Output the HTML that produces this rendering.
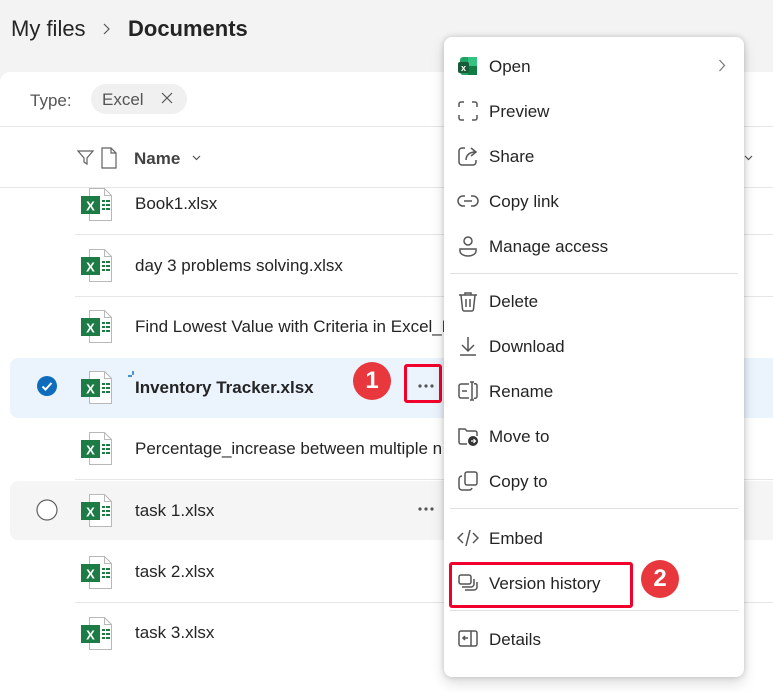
<!DOCTYPE html>
<html><head><style>
body{margin:0;width:773px;height:660px;overflow:hidden;background:#f3f3f3;font-family:"Liberation Sans",Arial,sans-serif;position:relative;color:#242424}
.a{position:absolute}
.panel{left:0;top:72px;width:800px;height:620px;background:#fff;border-radius:10px 0 0 0}
.line{position:absolute;height:1px;background:#e6e6e6}
.fn{position:absolute;left:135px;font-size:17px;color:#242424;white-space:nowrap}
.menu{left:444px;top:37px;width:300px;height:640px;background:#fff;border-radius:8px;box-shadow:0 0 6px rgba(0,0,0,.18),0 6px 14px rgba(0,0,0,.14)}
.mi{position:absolute;left:45px;font-size:17px;color:#242424;white-space:nowrap}
.ic{position:absolute;left:13px;width:22px;height:22px}
.sep{position:absolute;left:6px;width:288px;height:1px;background:#e0e0e0}
.xl{position:absolute;left:80px;width:36px;height:36px}
.badge{position:absolute;width:38px;height:38px;border-radius:50%;background:#e8383d;color:#fff;font-weight:bold;font-size:24px;text-align:center;line-height:38px}
.rb{position:absolute;border:3px solid #f0002a;border-radius:3px;box-sizing:border-box}
</style></head><body>
<div class="a" style="left:11px;top:16px;font-size:22px;color:#242424">My files</div>
<svg class="a" style="left:102px;top:23px" width="8" height="12"><path d="M2 1l5 5-5 5" fill="none" stroke="#555" stroke-width="1.2"/></svg>
<div class="a" style="left:128px;top:16px;font-size:22px;font-weight:bold;color:#242424">Documents</div>
<div class="a panel"></div>
<div class="a" style="left:30px;top:91px;font-size:17px;color:#555">Type:</div>
<div class="a" style="left:91px;top:84px;width:96px;height:30px;border-radius:15px;background:#f0f0f0"></div>
<div class="a" style="left:102px;top:90px;font-size:17px;color:#555">Excel</div>
<svg class="a" style="left:161px;top:92px" width="12" height="12"><path d="M1 1l10 10M11 1L1 11" stroke="#555" stroke-width="1.2"/></svg>
<div class="line" style="left:0;top:126px;width:773px"></div>
<svg class="a" style="left:76px;top:148px" width="20" height="20" viewBox="0 0 20 20"><path d="M2 3h15l-6 7v6l-3-2v-4z" fill="none" stroke="#616161" stroke-width="1.2"/></svg>
<svg class="a" style="left:100px;top:147px" width="18" height="22" viewBox="0 0 18 22"><path d="M2 1h9l5 5v15H2z M11 1v5h5" fill="none" stroke="#616161" stroke-width="1.2"/></svg>
<div class="a" style="left:134px;top:149px;font-size:17px;font-weight:bold;color:#424242">Name</div>
<svg class="a" style="left:192px;top:155px" width="9" height="6"><path d="M1 1l3.5 3.5L8 1" fill="none" stroke="#555" stroke-width="1.2"/></svg>
<div class="line" style="left:0;top:187px;width:773px"></div>
<div class="line" style="left:75px;top:234px;width:700px"></div>
<div class="line" style="left:75px;top:296px;width:700px"></div>
<div class="line" style="left:75px;top:602px;width:700px"></div>
<div class="line" style="left:75px;top:479px;width:700px"></div>
<div class="a" style="left:10px;top:358px;width:780px;height:60px;background:#ebf3fc;border-radius:8px"></div>
<div class="a" style="left:10px;top:481px;width:780px;height:59px;background:#f5f5f5;border-radius:8px"></div>

<svg width="0" height="0" style="position:absolute"><defs><g id="x">
<path d="M9.5 1.5h15l7 7v25h-22z" fill="#fff" stroke="#b8b8b8" stroke-width="1"/><path d="M24.5 1.5v7h7" fill="none" stroke="#b8b8b8"/>
<rect x="1" y="9" width="19" height="18" fill="#1d7c45"/>
<text x="10.5" y="23.5" font-family="Liberation Sans" font-weight="bold" font-size="13" fill="#fff" text-anchor="middle">X</text>
<g fill="#1d7c45"><rect x="22" y="13" width="3" height="2"/><rect x="26" y="13" width="4" height="2"/><rect x="22" y="17" width="3" height="2"/><rect x="26" y="17" width="4" height="2"/><rect x="22" y="21" width="3" height="2"/><rect x="26" y="21" width="4" height="2"/></g>
</g><g id="d" fill="#555"><circle cx="2" cy="2" r="1.6"/><circle cx="8" cy="2" r="1.6"/><circle cx="14" cy="2" r="1.6"/></g></defs></svg>
<svg class="xl" style="top:187px" viewBox="0 0 36 36"><use href="#x"/></svg>
<svg class="xl" style="top:248px" viewBox="0 0 36 36"><use href="#x"/></svg>
<svg class="xl" style="top:309px" viewBox="0 0 36 36"><use href="#x"/></svg>
<svg class="xl" style="top:370px" viewBox="0 0 36 36"><use href="#x"/></svg>
<svg class="xl" style="top:431px" viewBox="0 0 36 36"><use href="#x"/></svg>
<svg class="xl" style="top:493px" viewBox="0 0 36 36"><use href="#x"/></svg>
<svg class="xl" style="top:555px" viewBox="0 0 36 36"><use href="#x"/></svg>
<svg class="xl" style="top:616px" viewBox="0 0 36 36"><use href="#x"/></svg>

<div class="fn" style="top:194px">Book1.xlsx</div>
<div class="fn" style="top:256px">day 3 problems solving.xlsx</div>
<div class="fn" style="top:317px">Find Lowest Value with Criteria in Excel_P</div>
<div class="fn" style="top:378px;font-weight:bold">Inventory Tracker.xlsx</div>
<div class="fn" style="top:439px">Percentage_increase between multiple n</div>
<div class="fn" style="top:501px">task 1.xlsx</div>
<div class="fn" style="top:562px">task 2.xlsx</div>
<div class="fn" style="top:623px">task 3.xlsx</div>
<svg class="a" style="left:127px;top:370px" width="10" height="10"><path d="M1 6h4M6 1v4" stroke="#0f6cbd" stroke-width="1.4"/></svg>
<svg class="a" style="left:36px;top:375px" width="22" height="22"><circle cx="11" cy="11" r="10" fill="#0f6cbd"/><path d="M6.5 11.5l3 3 6-6.5" fill="none" stroke="#fff" stroke-width="2"/></svg>
<svg class="a" style="left:36px;top:499px" width="22" height="22"><circle cx="11" cy="11" r="10" fill="#fff" stroke="#616161" stroke-width="1.2"/></svg>
<svg class="a" style="left:418px;top:507px" width="16" height="4"><use href="#d"/></svg>
<svg class="a" style="left:418px;top:384px" width="16" height="4"><use href="#d"/></svg>
<div class="rb" style="left:404px;top:364px;width:38px;height:39px"></div>
<div class="badge" style="left:353px;top:362px">1</div>
<svg class="a" style="left:744px;top:155px" width="9" height="6"><path d="M1 1l3.5 3.5L8 1" fill="none" stroke="#555" stroke-width="1.2"/></svg>

<div class="a menu">
<svg class="ic" style="top:18px" viewBox="0 0 22 22"><rect x="3" y="2" width="17" height="18" rx="3" fill="#21a366"/><rect x="11" y="2" width="9" height="9" fill="#33c481"/><rect x="11" y="11" width="9" height="9" fill="#107c41"/><rect x="1" y="7" width="11" height="11" rx="2" fill="#185c37"/><text x="6.5" y="16" font-size="9" font-weight="bold" fill="#fff" text-anchor="middle" font-family="Liberation Sans">x</text></svg>
<div class="mi" style="top:20px">Open</div>
<svg class="a" style="left:274px;top:22px" width="8" height="13"><path d="M1.5 1l5 5.5-5 5.5" fill="none" stroke="#777" stroke-width="1.2"/></svg>
<svg class="ic" style="top:63px" viewBox="0 0 22 22" fill="none" stroke="#555" stroke-width="1.5"><path d="M2 7V4a2 2 0 0 1 2-2h3M15 2h3a2 2 0 0 1 2 2v3M20 15v3a2 2 0 0 1-2 2h-3M7 20H4a2 2 0 0 1-2-2v-3"/></svg>
<div class="mi" style="top:65px">Preview</div>
<svg class="ic" style="top:108px" viewBox="0 0 22 22" fill="none" stroke="#555" stroke-width="1.5"><path d="M8 3H5a3 3 0 0 0-3 3v11a3 3 0 0 0 3 3h11a3 3 0 0 0 3-3v-2"/><path d="M9 15c0-5 4-8 9-8M14 3l5 4-5 4"/></svg>
<div class="mi" style="top:110px">Share</div>
<svg class="ic" style="top:153px" viewBox="0 0 22 22" fill="none" stroke="#555" stroke-width="1.5"><path d="M8 6H6a5 5 0 0 0 0 10h2M14 6h2a5 5 0 0 1 0 10h-2M7 11h8"/></svg>
<div class="mi" style="top:155px">Copy link</div>
<svg class="ic" style="top:198px" viewBox="0 0 22 22" fill="none" stroke="#555" stroke-width="1.5"><circle cx="11" cy="6" r="4"/><path d="M3 14h16v2c0 3-4 5-8 5s-8-2-8-5z"/></svg>
<div class="mi" style="top:200px">Manage access</div>
<div class="sep" style="top:236px"></div>
<svg class="ic" style="top:253px" viewBox="0 0 22 22" fill="none" stroke="#555" stroke-width="1.5"><path d="M2 5h18M8 5V3h6v2M4 5l1.5 14a2 2 0 0 0 2 2h7a2 2 0 0 0 2-2L18 5M9 9v8M13 9v8"/></svg>
<div class="mi" style="top:255px">Delete</div>
<svg class="ic" style="top:298px" viewBox="0 0 22 22" fill="none" stroke="#555" stroke-width="1.5"><path d="M11 2v14M5 10l6 6 6-6M3 20h16"/></svg>
<div class="mi" style="top:300px">Download</div>
<svg class="ic" style="top:343px" viewBox="0 0 22 22" fill="none" stroke="#555" stroke-width="1.5"><path d="M12 4H4a2 2 0 0 0-2 2v10a2 2 0 0 0 2 2h8M17 4a2 2 0 0 1 3 2v10a2 2 0 0 1-3 2M15 2v18M13 2h4M13 20h4M5 11h5"/></svg>
<div class="mi" style="top:345px">Rename</div>
<svg class="ic" style="top:388px" viewBox="0 0 22 22" fill="none" stroke="#555" stroke-width="1.5"><path d="M10 19H4a2 2 0 0 1-2-2V4h6l2 2h8a2 2 0 0 1 2 2v3"/><circle cx="16" cy="16" r="5" fill="#333" stroke="none"/><path d="M14 16h4M16.5 14l2 2-2 2" stroke="#fff" stroke-width="1.2"/></svg>
<div class="mi" style="top:390px">Move to</div>
<svg class="ic" style="top:433px" viewBox="0 0 22 22" fill="none" stroke="#555" stroke-width="1.5"><rect x="8" y="2" width="12" height="13" rx="2"/><path d="M5 6a3 3 0 0 0-3 3v8a3 3 0 0 0 3 3h7a3 3 0 0 0 3-2"/></svg>
<div class="mi" style="top:435px">Copy to</div>
<div class="sep" style="top:471px"></div>
<svg class="ic" style="top:490px" viewBox="0 0 22 22" fill="none" stroke="#555" stroke-width="1.5"><path d="M6 6l-5 5 5 5M16 6l5 5-5 5M13 3l-4 16"/></svg>
<div class="mi" style="top:492px">Embed</div>
<svg class="ic" style="top:535px" viewBox="0 0 22 22" fill="none" stroke="#555" stroke-width="1.5"><rect x="2" y="3" width="12" height="9" rx="2"/><path d="M5 15h9a3 3 0 0 0 3-3V7M8 18h9a3 3 0 0 0 3-3V10"/></svg>
<div class="mi" style="top:537px">Version history</div>
<div class="sep" style="top:573px"></div>
<svg class="ic" style="top:591px" viewBox="0 0 22 22" fill="none" stroke="#555" stroke-width="1.5"><rect x="2" y="3" width="18" height="15" rx="2"/><path d="M14 3v15M6 10h5M8 8l-2 2 2 2"/></svg>
<div class="mi" style="top:593px">Details</div>
</div>
<div class="rb" style="left:449px;top:562px;width:184px;height:46px"></div>
<div class="badge" style="left:641px;top:560px">2</div>
</body></html>
